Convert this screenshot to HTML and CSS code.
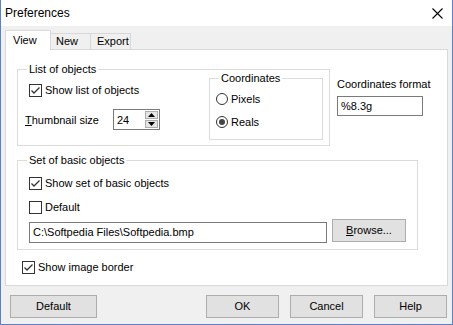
FILE: index.html
```html
<!DOCTYPE html>
<html>
<head>
<meta charset="utf-8">
<title>Preferences</title>
<link rel="stylesheet" href="styles.css">
</head>
<body>
<div class="window">
  <div class="titlebar">
    <span class="title">Preferences</span>
    <svg class="close" width="11" height="11" viewBox="0 0 11 11"><path d="M0.5 0.5 L10.5 10.5 M10.5 0.5 L0.5 10.5" stroke="#000" stroke-width="1.1" fill="none"/></svg>
  </div>
  <div class="client">
    <div class="tabs">
      <div class="tab active t-view">View</div>
      <div class="tab t-new">New</div>
      <div class="tab t-export">Export</div>
    </div>
    <div class="panel">
      <div class="row-top">
        <div class="group g-list">
          <div class="group-title">List of objects</div>
          <div class="list-body">
            <div class="list-left">
              <div class="check c-showlist">
                <svg class="box" width="13" height="13" viewBox="0 0 13 13"><rect x="0.5" y="0.5" width="12" height="12" fill="#fff" stroke="#333"/><path d="M2.5 6.5 L5 9 L10.5 3.5" stroke="#333" stroke-width="1.3" fill="none"/></svg>
                <span>Show list of objects</span>
              </div>
              <div class="thumb-row">
                <span class="thumb-label"><u>T</u>humbnail size</span>
                <div class="spin">
                  <span class="spin-val">24</span>
                  <div class="spin-btns">
                    <div class="spin-btn"><svg width="7" height="4" viewBox="0 0 7 4"><path d="M0 4 L3.5 0 L7 4 Z" fill="#000"/></svg></div>
                    <div class="spin-btn"><svg width="7" height="4" viewBox="0 0 7 4"><path d="M0 0 L3.5 4 L7 0 Z" fill="#000"/></svg></div>
                  </div>
                </div>
              </div>
            </div>
            <div class="group g-coords">
              <div class="group-title">Coordinates</div>
              <div class="coords-body">
                <div class="radio">
                  <svg width="12" height="12" viewBox="0 0 12 12"><circle cx="6" cy="6" r="5.5" fill="#fff" stroke="#333"/></svg>
                  <span>Pixels</span>
                </div>
                <div class="radio">
                  <svg width="12" height="12" viewBox="0 0 12 12"><circle cx="6" cy="6" r="5.5" fill="#fff" stroke="#333"/><circle cx="6" cy="6" r="3" fill="#444"/></svg>
                  <span>Reals</span>
                </div>
              </div>
            </div>
          </div>
        </div>
        <div class="fmt">
          <div class="fmt-label">Coordinates format</div>
          <div class="field fmt-input">%8.3g</div>
        </div>
      </div>
      <div class="group g-set">
        <div class="group-title">Set of basic objects</div>
        <div class="set-body">
          <div class="check c-showset">
            <svg class="box" width="13" height="13" viewBox="0 0 13 13"><rect x="0.5" y="0.5" width="12" height="12" fill="#fff" stroke="#333"/><path d="M2.5 6.5 L5 9 L10.5 3.5" stroke="#333" stroke-width="1.3" fill="none"/></svg>
            <span>Show set of basic objects</span>
          </div>
          <div class="check c-default">
            <svg class="box" width="13" height="13" viewBox="0 0 13 13"><rect x="0.5" y="0.5" width="12" height="12" fill="#fff" stroke="#333"/></svg>
            <span>Default</span>
          </div>
          <div class="path-row">
            <div class="field path-input">C:\Softpedia Files\Softpedia.bmp</div>
            <div class="btn browse"><u>B</u>rowse...</div>
          </div>
        </div>
      </div>
      <div class="check c-border">
        <svg class="box" width="13" height="13" viewBox="0 0 13 13"><rect x="0.5" y="0.5" width="12" height="12" fill="#fff" stroke="#333"/><path d="M2.5 6.5 L5 9 L10.5 3.5" stroke="#333" stroke-width="1.3" fill="none"/></svg>
        <span>Show image border</span>
      </div>
    </div>
    <div class="buttons">
      <div class="btn b-default">Default</div>
      <div class="btn b-ok">OK</div>
      <div class="btn b-cancel">Cancel</div>
      <div class="btn b-help">Help</div>
    </div>
  </div>
</div>
</body>
</html>
```
FILE: styles.css
```css
* { box-sizing: border-box; }
html, body { margin: 0; padding: 0; background: #fff; }
body {
  font-family: "Liberation Sans", Arial, sans-serif;
  font-size: 11px;
  color: #000;
}
.window {
  width: 453px;
  height: 325px;
  border: 1px solid #5a80c6;
  border-top: none;
  background: #f0f0f0;
  display: flex;
  flex-direction: column;
}
.titlebar {
  height: 26px;
  flex: none;
  background: #fff;
  display: flex;
  align-items: center;
  justify-content: space-between;
  padding: 0 9px 0 4px;
}
.title { font-size: 12px; line-height: 16px; }
.close { display: block; margin-top: 1px; }
.client {
  flex: 1;
  padding: 4px 4px 0 4px;
  display: flex;
  flex-direction: column;
}
.tabs {
  display: flex;
  align-items: flex-end;
  height: 20px;
  margin-bottom: -1px;
  position: relative;
  z-index: 1;
}
.tab {
  height: 16px;
  margin-bottom: 1px;
  border: 1px solid #d9d9d9;
  border-bottom: none;
  background: #f0f0f0;
  line-height: 15px;
}
.tab.active {
  height: 20px;
  margin-bottom: 0;
  background: #fff;
  padding-top: 3px;
  line-height: 13px;
  position: relative;
  z-index: 2;
}
.t-view { width: 46px; padding-left: 7px; }
.t-new { width: 41px; margin-left: -1px; padding-left: 5px; }
.t-export { width: 41px; margin-left: -1px; padding-left: 6px; }
.panel {
  height: 237px;
  flex: none;
  background: #fff;
  border: 1px solid #d9d9d9;
  display: flex;
  flex-direction: column;
  align-items: flex-start;
}
.row-top { display: flex; align-items: flex-start; }
.group {
  border: 1px solid #dcdcdc;
  flex: none;
}
.group-title {
  width: max-content;
  margin: -7px 0 0 9px;
  padding: 0 2px;
  line-height: 13px;
  background: #fff;
}
.g-list { margin: 19px 0 0 11px; width: 313px; height: 77px; }
.list-body { display: flex; align-items: flex-start; }
.list-left { width: 191px; padding-left: 7px; }
.check {
  display: flex;
  align-items: center;
  height: 13px;
  line-height: 13px;
}
.check .box { display: block; margin-right: 3px; flex: none; }
.c-showlist { margin: 8px 0 0 4px; }
.thumb-row {
  margin-top: 12px;
  height: 21px;
  display: flex;
  align-items: center;
}
.thumb-label { width: 88px; }
.spin {
  width: 47px;
  height: 21px;
  border: 1px solid #7a7a7a;
  display: flex;
  align-items: center;
  justify-content: space-between;
  padding: 0 1px 0 3px;
}
.spin-btns { display: flex; flex-direction: column; gap: 1px; }
.spin-btn {
  width: 13px;
  height: 8px;
  background: #e5e5e5;
  border: 1px solid #adadad;
  display: flex;
  align-items: center;
  justify-content: center;
}
.spin-btn svg { display: block; }
.g-coords { margin-top: 2px; width: 114px; height: 62px; }
.coords-body {
  padding: 8px 0 0 6px;
  display: flex;
  flex-direction: column;
  gap: 11px;
}
.radio { display: flex; align-items: center; height: 12px; line-height: 13px; }
.radio svg { display: block; margin-right: 3px; flex: none; }
.fmt { margin: 28px 0 0 7px; }
.fmt-label { line-height: 13px; }
.field {
  background: #fff;
  border: 1px solid #7a7a7a;
  padding-left: 3px;
  line-height: 18px;
  white-space: nowrap;
}
.fmt-input { margin-top: 5px; width: 86px; height: 20px; }
.g-set { margin: 14px 0 0 11px; width: 401px; height: 90px; }
.set-body { padding-left: 11px; }
.c-showset { margin-top: 10px; }
.c-default { margin-top: 11px; }
.path-row { margin-top: 5px; display: flex; align-items: flex-start; }
.path-input { margin-top: 3px; width: 298px; height: 21px; }
.btn {
  background: #e1e1e1;
  border: 1px solid #adadad;
  height: 23px;
  line-height: 21px;
  text-align: center;
  flex: none;
}
.browse { margin-left: 5px; width: 74px; }
.c-border { margin: 11px 0 0 16px; }
.buttons {
  margin-top: 9px;
  display: flex;
  padding-right: 1px;
}
.b-default { margin-left: 5px; width: 87px; }
.b-ok { margin-left: auto; width: 73px; }
.b-cancel { margin-left: 11px; width: 73px; }
.b-help { margin-left: 11px; width: 73px; }
```
